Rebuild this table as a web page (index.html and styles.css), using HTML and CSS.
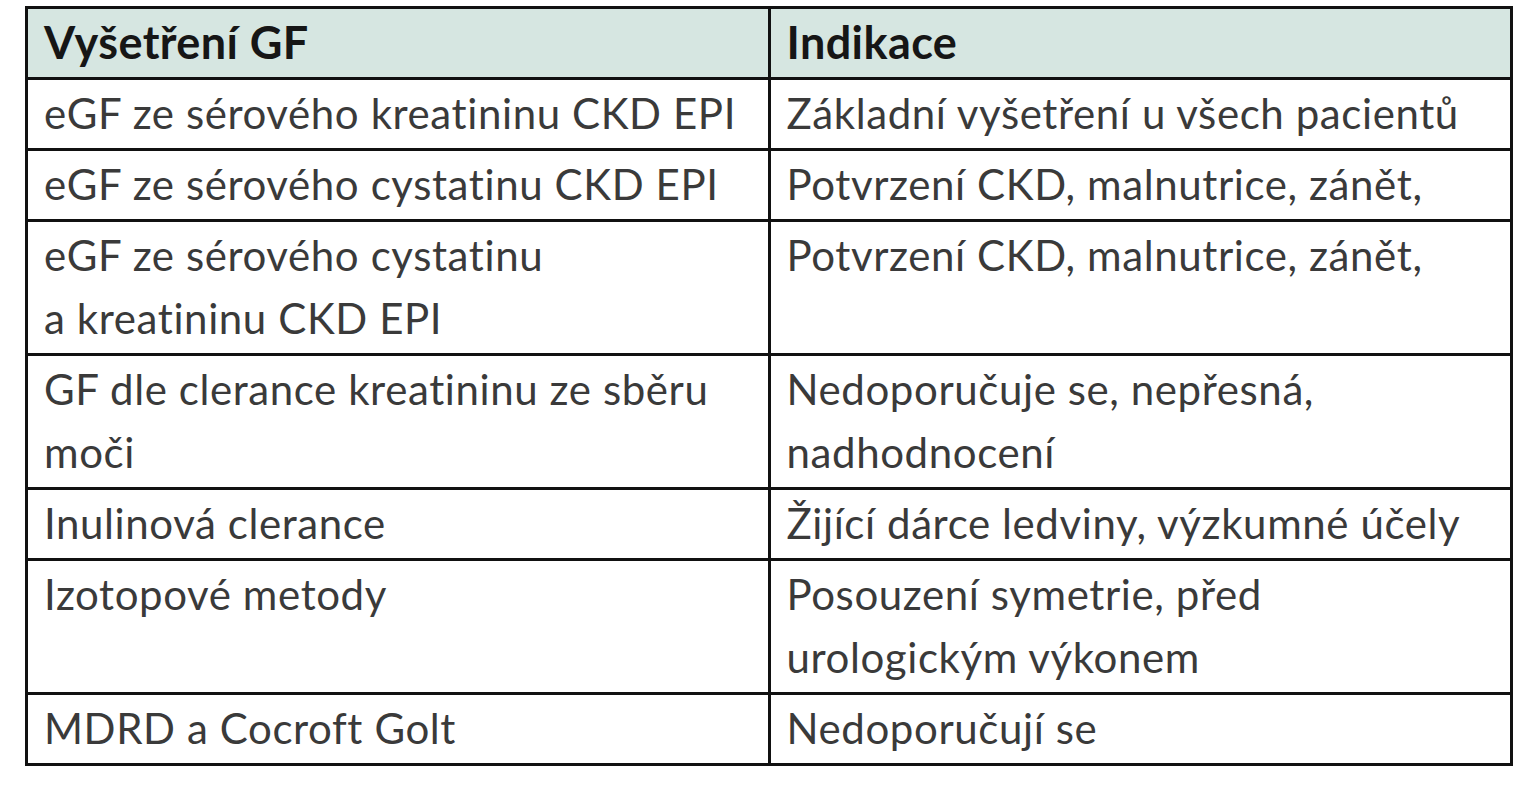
FILE: index.html
```html
<!DOCTYPE html>
<html lang="cs">
<head>
<meta charset="utf-8">
<title>Vyšetření GF</title>
<link rel="stylesheet" href="styles.css">
</head>
<body>
<table class="gf-table">
  <thead>
    <tr>
      <th class="col-a">Vyšetření GF</th>
      <th class="col-b">Indikace</th>
    </tr>
  </thead>
  <tbody>
    <tr>
      <td>eGF ze sérového kreatininu CKD EPI</td>
      <td>Základní vyšetření u všech pacientů</td>
    </tr>
    <tr>
      <td>eGF ze sérového cystatinu CKD EPI</td>
      <td>Potvrzení CKD, malnutrice, zánět,</td>
    </tr>
    <tr>
      <td>eGF ze sérového cystatinu<br>a kreatininu CKD EPI</td>
      <td>Potvrzení CKD, malnutrice, zánět,</td>
    </tr>
    <tr>
      <td>GF dle clerance kreatininu ze sběru<br>moči</td>
      <td>Nedoporučuje se, nepřesná,<br>nadhodnocení</td>
    </tr>
    <tr>
      <td>Inulinová clerance</td>
      <td>Žijící dárce ledviny, výzkumné účely</td>
    </tr>
    <tr>
      <td>Izotopové metody</td>
      <td>Posouzení symetrie, před<br>urologickým výkonem</td>
    </tr>
    <tr>
      <td>MDRD a Cocroft Golt</td>
      <td>Nedoporučují se</td>
    </tr>
  </tbody>
</table>
</body>
</html>
```

FILE: styles.css
```css
html, body {
  margin: 0;
  padding: 0;
  background: #ffffff;
}

body {
  font-family: "Lato", "Liberation Sans", sans-serif;
  font-variant-ligatures: none;
}

.gf-table {
  margin: 6px 0 0 25px;
  width: 1488px;
  border-collapse: collapse;
  table-layout: fixed;
  border: 3px solid #111111;
}

.gf-table th,
.gf-table td {
  border: 3px solid #111111;
  text-align: left;
  vertical-align: top;
  padding: 2px 14px 3px 16px;
  line-height: 63px;
  white-space: nowrap;
}

.gf-table th {
  background: #d6e6e1;
  color: #161616;
  font-weight: 700;
  font-size: 45px;
  letter-spacing: 0.4px;
}

.gf-table td {
  color: #3a3a3a;
  font-weight: 400;
  font-size: 42px;
  letter-spacing: 0.6px;
}

.col-a,
.col-b {
  width: 50%;
}
```
